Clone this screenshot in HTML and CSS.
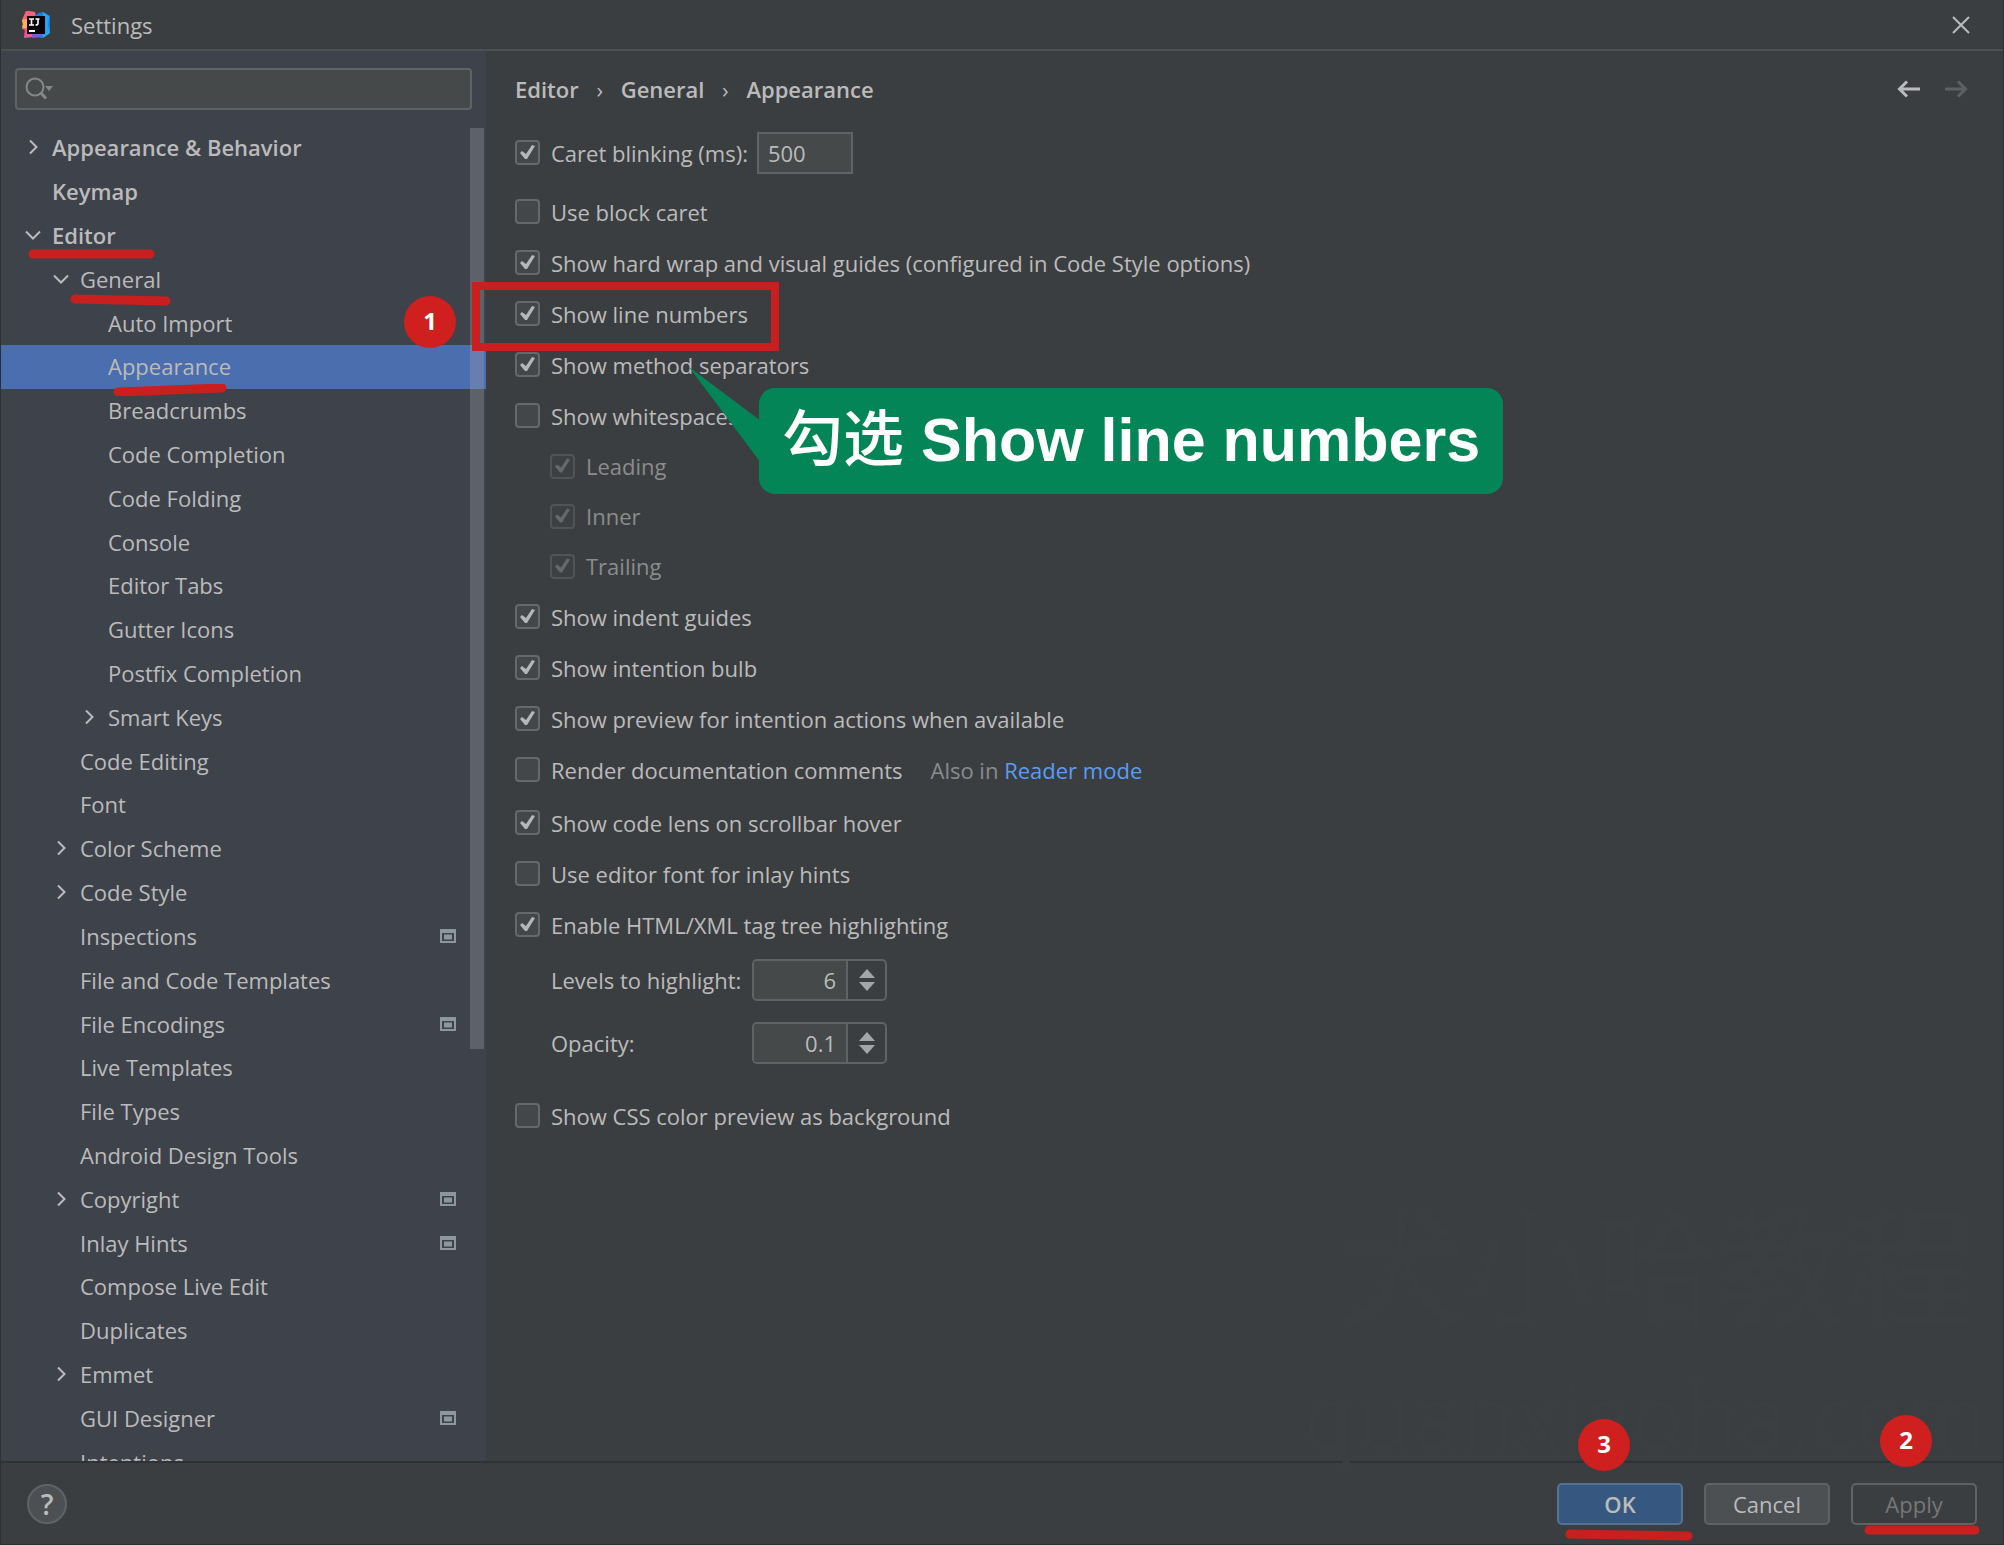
FILE: index.html
```html
<!DOCTYPE html>
<html lang="en">
<head>
  <meta charset="UTF-8" />
  <meta name="viewport" content="width=device-width, initial-scale=1" />
  <title>Settings</title>
  <link rel="stylesheet" href="styles.css">
</head>
<body>

  <!-- shared icons -->
  <svg class="defs" width="0" height="0" aria-hidden="true">
    <symbol id="closed" viewBox="0 0 16 16"><path d="M5 1.500l6.500 6.500-6.500 6.500" fill="none" stroke="currentColor" stroke-width="2" /></symbol>
    <symbol id="open" viewBox="0 0 16 16"><path d="M1 4.500l7 7 7-7" fill="none" stroke="currentColor" stroke-width="2" /></symbol>
    <symbol id="project" viewBox="0 0 16 14"><path d="M0 0h16v14H0zM2 4v8h12V4z" fill="currentColor" fill-rule="evenodd" /><path d="M4 5.500h8v5H4z" fill="currentColor" /></symbol>
    <symbol id="up" viewBox="0 0 16 10"><path d="M0 10l8-9 8 9z" fill="currentColor" /></symbol>
    <symbol id="down" viewBox="0 0 16 10"><path d="M0 0l8 9 8-9z" fill="currentColor" /></symbol>
  </svg>

  <header class="titlebar">
    <svg class="logo" viewBox="0 0 28 28" aria-hidden="true">
      <path d="M4 0l9 1 2 9-6 10-9-2 1-4-1-5z" fill="#f97a5c" />
      <path d="M4 0l9 1-1 7-11 2z" fill="#f2617f" />
      <path d="M0 9l6-1v11l-6-3 1-3z" fill="#fdb060" />
      <path d="M2 27l1-10 10 2-1 7z" fill="#e8559d" />
      <path d="M12 5l5-3 4-1 7 4v17l-7 5-9-1 2-10z" fill="#1a7fe0" />
      <path d="M21 1l6 4-1 9 2 8-7 5-1-6z" fill="#27a6ee" />
      <path d="M10 21h12l-4 5-8 1z" fill="#7d5ce0" />
      <path d="M5 5h18v18H5z" fill="#0a0509" />
      <path d="M7 8h5M9.500 8v6M7 14h5M13.500 8h4M16 8v4.500q0 1.500-2.500 1.500" fill="none" stroke="#fff" stroke-width="1.600" />
      <path d="M7 19h6v2H7z" fill="#fff" />
    </svg>
    <h1 class="title">Settings</h1>
    <button class="close" aria-label="Close">
      <svg width="18" height="18" viewBox="0 0 18 18"><path d="M1 1l16 16M17 1L1 17" fill="none" stroke="currentColor" stroke-width="2" /></svg>
    </button>
  </header>

  <div class="main">
    <aside class="sidebar">
      <div class="search">
        <svg width="30" height="24" viewBox="0 0 30 24" aria-hidden="true">
          <circle cx="10" cy="10" r="8.500" fill="none" stroke="currentColor" stroke-width="2" />
          <path d="M16 16l5 5.500" stroke="currentColor" stroke-width="3" />
          <path d="M20 9h8l-4 5z" fill="currentColor" />
        </svg>
        <input type="text" aria-label="Search settings">
      </div>

      <div class="tree-view">
        <ul class="tree">
          <li class="top"><svg class="arrow"><use href="#closed" /></svg><a href="#">Appearance &amp; Behavior</a></li>
          <li class="top"><a href="#">Keymap</a></li>
          <li class="top"><svg class="arrow"><use href="#open" /></svg><a href="#">Editor</a>
            <svg class="mark mark-editor" viewBox="0 0 128 12"><path d="M5 6h117" /></svg></li>
          <li class="sub"><svg class="arrow"><use href="#open" /></svg><a href="#">General</a>
            <svg class="mark mark-general" viewBox="0 0 102 12"><path d="M5 5l91 2" /></svg></li>
          <li class="leaf"><a href="#">Auto Import</a></li>
          <li class="leaf selected"><a href="#">Appearance</a>
            <svg class="mark mark-appearance" viewBox="0 0 116 12"><path d="M6 8l104-4" /></svg></li>
          <li class="leaf"><a href="#">Breadcrumbs</a></li>
          <li class="leaf"><a href="#">Code Completion</a></li>
          <li class="leaf"><a href="#">Code Folding</a></li>
          <li class="leaf"><a href="#">Console</a></li>
          <li class="leaf"><a href="#">Editor Tabs</a></li>
          <li class="leaf"><a href="#">Gutter Icons</a></li>
          <li class="leaf"><a href="#">Postfix Completion</a></li>
          <li class="leaf"><svg class="arrow"><use href="#closed" /></svg><a href="#">Smart Keys</a></li>
          <li class="sub"><a href="#">Code Editing</a></li>
          <li class="sub"><a href="#">Font</a></li>
          <li class="sub"><svg class="arrow"><use href="#closed" /></svg><a href="#">Color Scheme</a></li>
          <li class="sub"><svg class="arrow"><use href="#closed" /></svg><a href="#">Code Style</a></li>
          <li class="sub"><a href="#">Inspections</a><svg class="project"><use href="#project" /></svg></li>
          <li class="sub"><a href="#">File and Code Templates</a></li>
          <li class="sub"><a href="#">File Encodings</a><svg class="project"><use href="#project" /></svg></li>
          <li class="sub"><a href="#">Live Templates</a></li>
          <li class="sub"><a href="#">File Types</a></li>
          <li class="sub"><a href="#">Android Design Tools</a></li>
          <li class="sub"><svg class="arrow"><use href="#closed" /></svg><a href="#">Copyright</a><svg class="project"><use href="#project" /></svg></li>
          <li class="sub"><a href="#">Inlay Hints</a><svg class="project"><use href="#project" /></svg></li>
          <li class="sub"><a href="#">Compose Live Edit</a></li>
          <li class="sub"><a href="#">Duplicates</a></li>
          <li class="sub"><svg class="arrow"><use href="#closed" /></svg><a href="#">Emmet</a></li>
          <li class="sub"><a href="#">GUI Designer</a><svg class="project"><use href="#project" /></svg></li>
          <li class="sub"><a href="#">Intentions</a></li>
        </ul>
        <div class="scrollbar"></div>
      </div>
    </aside>

    <main class="content">
      <div class="content-head">
        <nav class="breadcrumbs" aria-label="Breadcrumbs">
          <a href="#">Editor</a>
          <span class="sep">›</span>
          <a href="#">General</a>
          <span class="sep">›</span>
          <a href="#">Appearance</a>
        </nav>
        <div class="history">
          <button aria-label="Back"><svg width="24" height="18" viewBox="0 0 24 18"><path d="M23 9H3M10 1.500L2.500 9l7.500 7.500" fill="none" stroke="currentColor" stroke-width="3" /></svg></button>
          <button aria-label="Forward" disabled><svg width="24" height="18" viewBox="0 0 24 18"><path d="M1 9h20M14 1.500L21.500 9 14 16.500" fill="none" stroke="currentColor" stroke-width="3" /></svg></button>
        </div>
      </div>

      <form class="options">
        <div class="row caret-row">
          <label><input type="checkbox" checked>Caret blinking (ms):</label>
          <input class="field" type="text" value="500" aria-label="Caret blinking period">
        </div>
        <div class="row"><label><input type="checkbox">Use block caret</label></div>
        <div class="row"><label><input type="checkbox" checked>Show hard wrap and visual guides (configured in Code Style options)</label></div>
        <div class="row noted">
          <label><input type="checkbox" checked>Show line numbers</label>
          <span class="frame"></span>
          <span class="badge badge-one">1</span>
        </div>
        <div class="row"><label><input type="checkbox" checked>Show method separators</label></div>
        <div class="row noted">
          <label><input type="checkbox">Show whitespaces</label>
          <div class="callout">
            <svg class="tail" width="72" height="96" viewBox="0 0 72 96" aria-hidden="true"><path d="M0 0l72 54v42z" /></svg>
            <span lang="zh">勾选</span> Show line numbers
          </div>
        </div>
        <div class="row nested"><label><input type="checkbox" checked disabled>Leading</label></div>
        <div class="row nested"><label><input type="checkbox" checked disabled>Inner</label></div>
        <div class="row nested"><label><input type="checkbox" checked disabled>Trailing</label></div>
        <div class="row"><label><input type="checkbox" checked>Show indent guides</label></div>
        <div class="row"><label><input type="checkbox" checked>Show intention bulb</label></div>
        <div class="row"><label><input type="checkbox" checked>Show preview for intention actions when available</label></div>
        <div class="row render-row">
          <label><input type="checkbox">Render documentation comments</label>
          <span class="hint">Also in <a href="#">Reader mode</a></span>
        </div>
        <div class="row"><label><input type="checkbox" checked>Show code lens on scrollbar hover</label></div>
        <div class="row"><label><input type="checkbox">Use editor font for inlay hints</label></div>
        <div class="row"><label><input type="checkbox" checked>Enable HTML/XML tag tree highlighting</label></div>

        <div class="levels">
          <label for="levels">Levels to highlight:</label>
          <div class="spinner">
            <input type="number" id="levels" value="6">
            <div class="steps">
              <button type="button" aria-label="More levels"><svg><use href="#up" /></svg></button>
              <button type="button" aria-label="Fewer levels"><svg><use href="#down" /></svg></button>
            </div>
          </div>
          <label for="opacity">Opacity:</label>
          <div class="spinner">
            <input type="number" id="opacity" value="0.1" step="0.1">
            <div class="steps">
              <button type="button" aria-label="More opacity"><svg><use href="#up" /></svg></button>
              <button type="button" aria-label="Less opacity"><svg><use href="#down" /></svg></button>
            </div>
          </div>
        </div>

        <div class="row"><label><input type="checkbox">Show CSS color preview as background</label></div>
      </form>

      <div class="watermark" lang="zh">
        <div>犬小哈教程</div>
        <div class="site">quanxiaoha.com</div>
      </div>
    </main>
  </div>

  <footer class="footer">
    <button class="help" aria-label="Help">?</button>
    <div class="action">
      <button class="btn primary">OK</button>
      <span class="badge badge-three">3</span>
      <svg class="mark mark-ok" viewBox="0 0 130 12"><path d="M6 5l118 2" /></svg>
    </div>
    <div class="action"><button class="btn">Cancel</button></div>
    <div class="action">
      <button class="btn" disabled>Apply</button>
      <span class="badge badge-two">2</span>
      <svg class="mark mark-apply" viewBox="0 0 118 12"><path d="M6 6h106" /></svg>
    </div>
  </footer>

</body>
</html>
```

FILE: styles.css
```css
* {
  box-sizing: border-box;
}
body {
  display: flex;
  flex-direction: column;
  height: 100vh;
  margin: 0;
  background: #3b3e40;
  color: #bbbbbb;
  font-family: "Open Sans", "Noto Sans CJK SC", sans-serif;
  font-size: 22px;
  line-height: 32px;
  border: 1px solid #2d3032;
  border-top: none;
  overflow: hidden;
}
a {
  color: inherit;
  text-decoration: none;
}
button,
input {
  font: inherit;
  color: inherit;
  margin: 0;
}
button {
  padding: 0;
  border: none;
  background: none;
  cursor: pointer;
}
svg {
  display: block;
  flex: none;
}
.defs {
  position: absolute;
}

/* title bar */
.titlebar {
  display: flex;
  align-items: center;
  height: 51px;
  padding: 0 33px 0 21px;
  border-bottom: 2px solid #4d5052;
}
.logo {
  width: 28px;
  height: 28px;
}
.title {
  flex: 1;
  margin: 0 0 0 21px;
  font-size: 22px;
  font-weight: 400;
}

.main {
  flex: 1;
  display: flex;
  min-height: 0;
}

/* settings tree */
.sidebar {
  display: flex;
  flex-direction: column;
  width: 485px;
  flex: none;
  background: #3e424a;
}
.search {
  display: flex;
  align-items: center;
  height: 42px;
  margin: 17px 14px 16px;
  padding: 0 8px;
  border: 2px solid #5f6365;
  border-radius: 4px;
  background: #45494a;
  color: #84888a;
}
.search input {
  flex: 1;
  min-width: 0;
  border: none;
  outline: none;
  background: none;
  color: #bbbbbb;
}
.tree-view {
  position: relative;
  flex: 1;
  min-height: 0;
  overflow: hidden;
}
.tree {
  display: grid;
  grid-auto-rows: 1fr;
  height: calc(100% + 23px);
  margin: 0;
  padding: 0;
  list-style: none;
}
.tree li {
  position: relative;
  display: flex;
  align-items: center;
  padding-right: 30px;
  padding-bottom: 1px;
}
.tree a {
  flex: 1;
}
.top {
  padding-left: 51px;
  font-weight: 600;
}
.sub {
  padding-left: 79px;
}
.leaf {
  padding-left: 107px;
}
.arrow {
  width: 16px;
  height: 16px;
  margin-left: -27px;
  margin-right: 11px;
}
.project {
  width: 16px;
  height: 14px;
  color: #8d979f;
}
.selected {
  background: #4b6eaf;
}
.scrollbar {
  position: absolute;
  top: 2px;
  right: 2px;
  width: 14px;
  height: 69%;
  background: rgba(166, 168, 180, 0.3);
}

/* right pane */
.content {
  position: relative;
  flex: 1;
  min-width: 0;
  padding: 22px 35px 0 29px;
}
.content-head {
  display: flex;
  align-items: center;
  justify-content: space-between;
  height: 32px;
}
.breadcrumbs {
  display: flex;
  align-items: center;
  font-weight: 600;
}
.sep {
  width: 42px;
  text-align: center;
  font-weight: 400;
}
.history {
  display: flex;
  gap: 23px;
}
.history button:disabled {
  color: #5e6163;
}

.options {
  padding-top: 22px;
}
.row {
  display: flex;
  align-items: center;
  height: 51px;
}
.row label {
  display: flex;
  align-items: center;
  gap: 11px;
}
.caret-row {
  gap: 9px;
  margin-bottom: 8px;
}
.render-row {
  margin-bottom: 2px;
}
.nested {
  height: 50px;
  padding-left: 35px;
  color: #8a8c8d;
}
.noted {
  position: relative;
}
.hint {
  margin-left: 28px;
  color: #8a8c8d;
}
.hint a {
  color: #589df6;
}

input[type="checkbox"] {
  appearance: none;
  width: 25px;
  height: 25px;
  border: 2px solid #65696b;
  border-radius: 4px;
  background: #43474a;
}
input[type="checkbox"]:checked::before {
  content: "";
  display: block;
  width: 21px;
  height: 21px;
  background: #b4b6b7;
  clip-path: polygon(3px 11px, 5px 9px, 9px 12px, 15px 3px, 18px 4px, 10px 17px, 8px 17px);
}
input[type="checkbox"]:disabled {
  border-color: #515456;
  background: #3d4042;
}
input[type="checkbox"]:disabled::before {
  background: #66696b;
}

.field {
  width: 96px;
  height: 42px;
  padding: 0 9px;
  border: 2px solid #5f6365;
  background: #45494a;
}
.levels {
  display: grid;
  grid-template-columns: 191px 135px;
  grid-auto-rows: 42px;
  align-items: center;
  gap: 21px 10px;
  padding: 9px 0 26px 36px;
  white-space: nowrap;
}
.spinner {
  display: flex;
  height: 42px;
  border: 2px solid #5f6365;
  border-radius: 5px;
  overflow: hidden;
}
.spinner input {
  flex: 1;
  min-width: 0;
  padding: 0 10px;
  border: none;
  border-right: 2px solid #5f6365;
  background: #45494a;
  text-align: right;
  appearance: textfield;
}
.spinner input::-webkit-inner-spin-button {
  display: none;
}
.steps {
  display: flex;
  flex-direction: column;
  align-items: center;
  justify-content: center;
  gap: 4px;
  width: 37px;
  color: #a3a6a8;
}
.steps svg {
  width: 16px;
  height: 10px;
}

.watermark {
  position: absolute;
  right: 16px;
  bottom: -18px;
  color: #3c3f42;
  font-size: 127px;
  line-height: 168px;
  text-align: right;
  pointer-events: none;
  user-select: none;
}
.watermark div {
  padding-right: 14px;
}
.watermark .site {
  padding: 0;
  font-size: 88px;
  line-height: 128px;
}

/* bottom bar */
.footer {
  display: flex;
  align-items: center;
  gap: 21px;
  height: 83px;
  padding: 0 26px;
  border-top: 2px solid #2f3234;
}
.help {
  width: 40px;
  height: 40px;
  margin-right: auto;
  border: 2px solid #5f6365;
  border-radius: 50%;
  background: #4c5052;
  font-size: 28px;
  font-weight: 600;
}
.action {
  position: relative;
}
.btn {
  display: block;
  width: 126px;
  height: 42px;
  border: 2px solid #5f6365;
  border-radius: 5px;
  background: #4c5052;
}
.btn.primary {
  border-color: #557293;
  background: #365880;
  font-weight: 600;
}
.btn:disabled {
  background: none;
  color: #777777;
}

/* red notes drawn over the window */
.badge {
  position: absolute;
  z-index: 2;
  width: 52px;
  height: 52px;
  border-radius: 50%;
  background: #cf1f1f;
  color: #fff;
  font-size: 24px;
  font-weight: 700;
  line-height: 50px;
  text-align: center;
}
.badge-one {
  left: -111px;
  top: 8px;
}
.badge-two {
  left: 29px;
  top: -68px;
}
.badge-three {
  left: 21px;
  top: -64px;
}
.frame {
  position: absolute;
  left: -43px;
  top: -6px;
  width: 307px;
  height: 69px;
  border: 8px solid #c91f1f;
  pointer-events: none;
}
.mark {
  position: absolute;
  z-index: 2;
  height: 12px;
  fill: none;
  stroke: #c91f1f;
  stroke-width: 9;
  stroke-linecap: round;
  pointer-events: none;
}
.mark-editor {
  left: 27px;
  top: 34px;
  width: 128px;
}
.mark-general {
  left: 69px;
  top: 37px;
  width: 102px;
}
.mark-appearance {
  left: 111px;
  top: 39px;
  width: 116px;
}
.mark-ok {
  left: 7px;
  top: 46px;
  width: 130px;
}
.mark-apply {
  left: 12px;
  top: 41px;
  width: 118px;
}

/* green speech bubble */
.callout {
  position: absolute;
  z-index: 1;
  left: 244px;
  top: -2px;
  height: 106px;
  padding: 0 23px;
  border-radius: 16px;
  background: #048558;
  color: #fff;
  font-family: "Liberation Sans", "Noto Sans CJK SC", sans-serif;
  font-size: 61px;
  font-weight: 700;
  line-height: 104px;
  white-space: nowrap;
}
.callout span {
  font-weight: 500;
}
.tail {
  position: absolute;
  left: -70px;
  top: -21px;
  fill: #048558;
}
```
